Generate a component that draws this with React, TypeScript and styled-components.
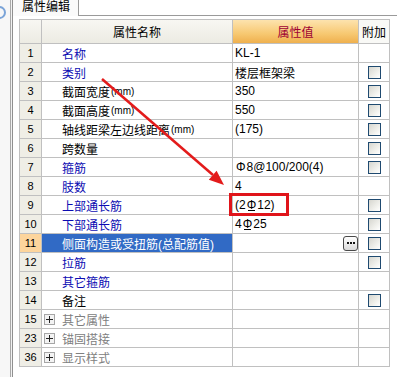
import React from "react";
import styled, { createGlobalStyle, css } from "styled-components";

const GlobalStyle = createGlobalStyle`
  html, body {
    margin: 0;
    padding: 0;
    background: #ffffff;
  }
  body {
    font-family: "Liberation Sans", "Noto Sans CJK SC", sans-serif;
    font-size: 12px;
    color: #000000;
  }
`;

const Root = styled.div`
  position: relative;
  width: 397px;
  height: 377px;
  display: flex;
  overflow: hidden;
  background: #ffffff;
`;

const SideStrip = styled.div`
  width: 10px;
  flex: none;
  background: #f7f7f7;
  overflow: hidden;
`;

const Knob = styled.div`
  width: 9px;
  height: 9px;
  margin: 6px 0 0 -7px;
  border-radius: 50%;
  border: 2px solid #7ba4d8;
`;

const Rail = styled.div`
  width: 1px;
  flex: none;
  border-left: 1px solid #a9a9a9;
  border-right: 1px solid #909090;
  background: #f2f2f2;
`;

const Panel = styled.div`
  flex: 1;
  display: flex;
  flex-direction: column;
`;

const TabStrip = styled.div`
  display: flex;
  height: 16px;
`;

const Tab = styled.div`
  box-sizing: border-box;
  width: 66px;
  padding-left: 9px;
  line-height: 15px;
  background: #fafafa;
  border-right: 1px solid #9a9a9a;
`;

const TabRest = styled.div`
  flex: 1;
  border-bottom: 1px solid #9a9a9a;
`;

const GridArea = styled.div`
  padding: 3px 0 0 6px;
`;

const Grid = styled.div`
  display: grid;
  grid-template-columns: 22px 191px 126px 31px;
  grid-template-rows: 24px;
  grid-auto-rows: 19px;
  width: max-content;
  border-left: 1px solid #c0c0c0;
  border-top: 1px solid #c0c0c0;
`;

const Cell = styled.div`
  box-sizing: border-box;
  display: flex;
  align-items: center;
  min-width: 0;
  white-space: nowrap;
  border-right: 1px solid #c0c0c0;
  border-bottom: 1px solid #c0c0c0;
`;

const HeadCell = styled(Cell)<{ $kind?: "value" | "extra" }>`
  justify-content: center;
  background: linear-gradient(#f8f7f2, #ecebe3);
  ${(p) =>
    p.$kind === "value" &&
    css`
      color: #9e0034;
      background: linear-gradient(#fde3ae, #f7c871 60%, #efb04e);
    `}
  ${(p) =>
    p.$kind === "extra" &&
    css`
      background: #f9f9f6;
    `}
`;

const NumCell = styled(Cell)<{ $selected?: boolean }>`
  justify-content: center;
  font-size: 11px;
  background: ${(p) => (p.$selected ? "#fdd59c" : "#efeee6")};
`;

type Tone = "blue" | "black" | "gray";

const toneColor: Record<Tone, string> = {
  blue: "#0c0cb2",
  black: "#000000",
  gray: "#808080",
};

const NameCell = styled(Cell)<{ $tone: Tone; $selected?: boolean }>`
  padding-left: 20px;
  color: ${(p) => toneColor[p.$tone]};
  ${(p) =>
    p.$selected &&
    css`
      background: #316ac5;
      color: #ffffff;
    `}
`;

const Unit = styled.span`
  font-size: 10px;
  padding-left: 1px;
`;

const GroupCell = styled(Cell)`
  padding-left: 2px;
  gap: 7px;
  color: #808080;
`;

const PlusBox = styled.span`
  position: relative;
  box-sizing: border-box;
  width: 11px;
  height: 11px;
  border: 1px solid #a6a6a6;
  background: #f3f3f3;
  &::before,
  &::after {
    content: "";
    position: absolute;
    background: #222222;
  }
  &::before {
    left: 1px;
    right: 1px;
    top: 4px;
    height: 1px;
  }
  &::after {
    top: 1px;
    bottom: 1px;
    left: 4px;
    width: 1px;
  }
`;

const ValueCell = styled(Cell)`
  padding-left: 2px;
`;

const CheckCell = styled(Cell)`
  justify-content: center;
`;

const CheckBox = styled.span`
  box-sizing: border-box;
  width: 13px;
  height: 13px;
  border: 1px solid #1f4a70;
  background: linear-gradient(135deg, #d6d6cf, #f4f4f0 70%, #ffffff);
`;

const MoreButton = styled.span`
  box-sizing: border-box;
  margin-left: auto;
  width: 15px;
  height: 15px;
  border: 1px solid #4a4a4a;
  border-radius: 3px;
  background: linear-gradient(#ffffff, #d9d9d9);
  display: flex;
  align-items: center;
  justify-content: center;
  gap: 1px;
`;

const Dot = styled.span`
  width: 2px;
  height: 2px;
  background: #111111;
`;

const Rebar = styled.span<{ $grade: number }>`
  position: relative;
  display: inline-block;
  margin: 0 1px;
  ${(p) =>
    p.$grade === 2 &&
    css`
      &::after {
        content: "";
        position: absolute;
        left: 1px;
        right: 1px;
        bottom: 1px;
        height: 1px;
        background: currentColor;
      }
    `}
`;

const Overlay = styled.svg`
  position: absolute;
  left: 0;
  top: 0;
  pointer-events: none;
`;

interface Row {
  no: number;
  name: string;
  tone: Tone;
  value?: React.ReactNode;
  check: boolean;
  selected?: boolean;
}

const rows: Row[] = [
  { no: 1, name: "名称", tone: "blue", value: "KL-1", check: false },
  { no: 2, name: "类别", tone: "blue", value: "楼层框架梁", check: true },
  { no: 3, name: "截面宽度(mm)", tone: "black", value: "350", check: true },
  { no: 4, name: "截面高度(mm)", tone: "black", value: "550", check: true },
  { no: 5, name: "轴线距梁左边线距离(mm)", tone: "black", value: "(175)", check: true },
  { no: 6, name: "跨数量", tone: "black", check: true },
  {
    no: 7,
    name: "箍筋",
    tone: "blue",
    value: (
      <>
        <Rebar $grade={1}>Φ</Rebar>8@100/200(4)
      </>
    ),
    check: true,
  },
  { no: 8, name: "肢数", tone: "blue", value: "4", check: false },
  {
    no: 9,
    name: "上部通长筋",
    tone: "blue",
    value: (
      <>
        (2<Rebar $grade={2}>Φ</Rebar>12)
      </>
    ),
    check: true,
  },
  {
    no: 10,
    name: "下部通长筋",
    tone: "blue",
    value: (
      <>
        4<Rebar $grade={2}>Φ</Rebar>25
      </>
    ),
    check: true,
  },
  { no: 11, name: "侧面构造或受扭筋(总配筋值)", tone: "blue", check: true, selected: true },
  { no: 12, name: "拉筋", tone: "blue", check: true },
  { no: 13, name: "其它箍筋", tone: "blue", check: false },
  { no: 14, name: "备注", tone: "black", check: true },
];

const groups = [
  { no: 15, name: "其它属性" },
  { no: 23, name: "锚固搭接" },
  { no: 36, name: "显示样式" },
];

// "(mm)" is drawn smaller than the label in the original grid
const renderName = (name: string) =>
  name.split(/(\(mm\))/).map((part, i) =>
    part === "(mm)" ? <Unit key={i}>{part}</Unit> : part
  );

const Annotation = () => (
  <Overlay width={397} height={377}>
    <line x1={102} y1={79} x2={213} y2={175} stroke="#e31b1b" strokeWidth={2.5} />
    <polygon points="224,185 208.8,179.7 216.6,170.7" fill="#e31b1b" />
    <rect x={230.5} y={194.5} width={57} height={20} fill="none" stroke="#e0141a" strokeWidth={3} />
  </Overlay>
);

export default function App() {
  return (
    <Root>
      <GlobalStyle />
      <SideStrip>
        <Knob />
      </SideStrip>
      <Rail />
      <Panel>
        <TabStrip>
          <Tab>属性编辑</Tab>
          <TabRest />
        </TabStrip>
        <GridArea>
          <Grid>
            <HeadCell />
            <HeadCell>属性名称</HeadCell>
            <HeadCell $kind="value">属性值</HeadCell>
            <HeadCell $kind="extra">附加</HeadCell>
            {rows.map((r) => (
              <React.Fragment key={r.no}>
                <NumCell $selected={r.selected}>{r.no}</NumCell>
                <NameCell $tone={r.tone} $selected={r.selected}>
                  {renderName(r.name)}
                </NameCell>
                <ValueCell>
                  {r.value}
                  {r.selected && (
                    <MoreButton>
                      <Dot />
                      <Dot />
                      <Dot />
                    </MoreButton>
                  )}
                </ValueCell>
                <CheckCell>{r.check && <CheckBox />}</CheckCell>
              </React.Fragment>
            ))}
            {groups.map((g) => (
              <React.Fragment key={g.no}>
                <NumCell>{g.no}</NumCell>
                <GroupCell>
                  <PlusBox />
                  {g.name}
                </GroupCell>
                <ValueCell />
                <CheckCell />
              </React.Fragment>
            ))}
          </Grid>
        </GridArea>
      </Panel>
      <Annotation />
    </Root>
  );
}
